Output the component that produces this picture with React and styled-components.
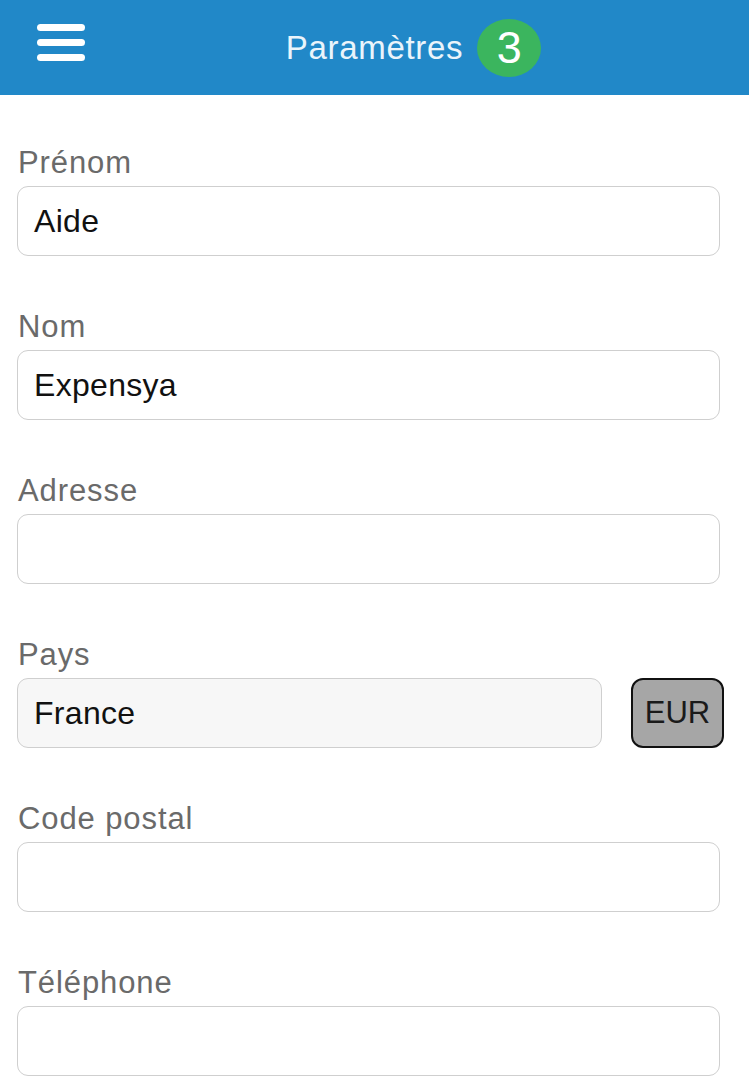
import React from "react";
import styled, { createGlobalStyle } from "styled-components";

const Global = createGlobalStyle`
  html, body { margin: 0; padding: 0; background: #fff; }
  body { font-family: "Liberation Sans", Arial, sans-serif; }
  * { box-sizing: border-box; }
`;

const Page = styled.div`
  width: 749px;
  min-height: 1082px;
  background: #fff;
  overflow: hidden;
`;

const Header = styled.header`
  height: 95px;
  background: #2188c8;
  display: flex;
  align-items: center;
  position: relative;
`;

const MenuButton = styled.button`
  position: absolute;
  left: 37px;
  top: 24px;
  width: 48px;
  height: 37px;
  padding: 0;
  border: 0;
  background: transparent;
  display: flex;
  flex-direction: column;
  justify-content: space-between;
`;

const MenuLine = styled.span`
  display: block;
  height: 7px;
  border-radius: 4px;
  background: #fff;
`;

const TitleWrap = styled.div`
  flex: 1;
  display: flex;
  justify-content: center;
  align-items: center;
  gap: 14px;
  padding-left: 78px;
`;

const Title = styled.h1`
  margin: 0;
  font-family: "Liberation Sans", Arial, sans-serif;
  font-weight: 400;
  font-size: 33px;
  letter-spacing: 0.7px;
  color: #eaf4fb;
`;

const Badge = styled.span`
  width: 64px;
  height: 58px;
  border-radius: 50%;
  background: #3bb55e;
  color: #fff;
  font-size: 45px;
  display: flex;
  align-items: center;
  justify-content: center;
  line-height: 1;
`;

const Form = styled.main`
  padding: 50px 0 0 17px;
  display: flex;
  flex-direction: column;
  gap: 53px;
`;

const Field = styled.div`
  display: flex;
  flex-direction: column;
  gap: 5px;
`;

const Label = styled.label`
  font-size: 31px;
  line-height: 36px;
  letter-spacing: 0.9px;
  color: #6a6a6a;
  padding-left: 1px;
`;

const Row = styled.div`
  display: flex;
  align-items: center;
  gap: 29px;
`;

const Input = styled.div`
  width: ${(p) => p.$w || 703}px;
  height: 70px;
  border: 1px solid #cfcfcf;
  border-radius: 11px;
  background: ${(p) => (p.$muted ? "#f7f7f7" : "#fff")};
  display: flex;
  align-items: center;
  padding-left: 16px;
  font-size: 32px;
  letter-spacing: 0.3px;
  color: #111;
`;

const CurrencyButton = styled.button`
  width: 93px;
  height: 70px;
  border: 2px solid #111;
  border-radius: 12px;
  background: #a6a6a6;
  font-family: "Liberation Sans", Arial, sans-serif;
  font-size: 31px;
  color: #1a1a1a;
  padding: 0;
`;

const fields = [
  { label: "Prénom", value: "Aide" },
  { label: "Nom", value: "Expensya" },
  { label: "Adresse", value: "" },
  { label: "Pays", value: "France", currency: "EUR" },
  { label: "Code postal", value: "" },
  { label: "Téléphone", value: "" },
];

export default function App() {
  return (
    <Page>
      <Global />
      <Header>
        <MenuButton aria-label="menu">
          <MenuLine />
          <MenuLine />
          <MenuLine />
        </MenuButton>
        <TitleWrap>
          <Title>Paramètres</Title>
          <Badge>3</Badge>
        </TitleWrap>
      </Header>
      <Form>
        {fields.map((f) => (
          <Field key={f.label}>
            <Label>{f.label}</Label>
            {f.currency ? (
              <Row>
                <Input $w={585} $muted>{f.value}</Input>
                <CurrencyButton>{f.currency}</CurrencyButton>
              </Row>
            ) : (
              <Input>{f.value}</Input>
            )}
          </Field>
        ))}
      </Form>
    </Page>
  );
}
